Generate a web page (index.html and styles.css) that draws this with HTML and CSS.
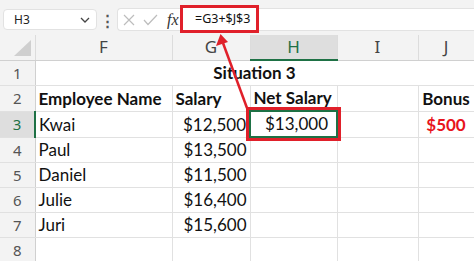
FILE: index.html
```html
<!DOCTYPE html>
<html>
<head>
  <title>Situation 3</title>
  <link rel="stylesheet" href="styles.css">
</head>
<body>
  <div class="window">
    <div class="toolbar">
      <div class="namebox">
        <span>H3</span>
        <svg class="chevron" width="10" height="6" viewBox="0 0 10 6"><path d="M1 1 L5 5 L9 1" fill="none" stroke="#444" stroke-width="1.3"/></svg>
      </div>
      <div class="dots">&#8942;</div>
      <div class="fbar">
        <div class="ficons">
          <svg width="12" height="12" viewBox="0 0 12 12"><path d="M1 1 L11 11 M11 1 L1 11" stroke="#bdbdbd" stroke-width="1.2"/></svg>
          <svg width="15" height="12" viewBox="0 0 15 12"><path d="M1 6 L5 10.5 L14 1" fill="none" stroke="#bdbdbd" stroke-width="1.2"/></svg>
          <span class="fx">fx</span>
        </div>
        <div class="formula">=G3+$J$3</div>
      </div>
    </div>

    <table class="sheet">
      <colgroup>
        <col class="c-row">
        <col class="c-f">
        <col class="c-g">
        <col class="c-h">
        <col class="c-i">
        <col class="c-j">
      </colgroup>
      <tr class="head">
        <th class="corner"><div class="tri"></div></th>
        <th>F</th>
        <th>G</th>
        <th class="sel">H</th>
        <th>I</th>
        <th>J</th>
      </tr>
      <tr>
        <th class="num">1</th>
        <td colspan="5" class="b center title">Situation 3</td>
      </tr>
      <tr>
        <th class="num">2</th>
        <td class="b">Employee Name</td>
        <td class="b">Salary</td>
        <td class="b">Net Salary</td>
        <td></td>
        <td class="b center">Bonus</td>
      </tr>
      <tr>
        <th class="num cur">3</th>
        <td>Kwai</td>
        <td class="r">$12,500</td>
        <td class="r active">$13,000</td>
        <td></td>
        <td class="b center red">$500</td>
      </tr>
      <tr>
        <th class="num">4</th>
        <td>Paul</td>
        <td class="r">$13,500</td>
        <td></td><td></td><td></td>
      </tr>
      <tr>
        <th class="num">5</th>
        <td>Daniel</td>
        <td class="r">$11,500</td>
        <td></td><td></td><td></td>
      </tr>
      <tr>
        <th class="num">6</th>
        <td>Julie</td>
        <td class="r">$16,400</td>
        <td></td><td></td><td></td>
      </tr>
      <tr>
        <th class="num">7</th>
        <td>Juri</td>
        <td class="r">$15,600</td>
        <td></td><td></td><td></td>
      </tr>
      <tr>
        <th class="num">8</th>
        <td></td><td></td><td></td><td></td><td></td>
      </tr>
    </table>

    <!-- annotation arrow from the cell up to the formula -->
    <svg class="arrow" width="474" height="261" viewBox="0 0 474 261">
      <path d="M247 108 L223 43" stroke="#e0202a" stroke-width="2.5" fill="none"/>
      <path d="M220.5 34 L216 46 L228 42 Z" fill="#e0202a"/>
    </svg>
  </div>
</body>
</html>
```

FILE: styles.css
```css
body {
  margin: 0;
  background: #ffffff;
}

.window {
  position: relative;
  width: 474px;
  height: 261px;
  overflow: hidden;
  background: #f3f3f3;
}

.toolbar {
  display: flex;
  align-items: center;
  height: 35px;
  padding-left: 3px;
  box-sizing: border-box;
  font-family: "Noto Sans", sans-serif;
}

.namebox {
  display: flex;
  align-items: center;
  justify-content: space-between;
  width: 94px;
  height: 21px;
  box-sizing: border-box;
  padding: 0 6px 0 10px;
  margin-top: 4px;
  background: #ffffff;
  border: 1px solid #e2e2e2;
  border-radius: 4px;
  font-size: 12px;
  color: #222;
}

.dots {
  width: 20px;
  text-align: center;
  margin-top: 4px;
  font-size: 15px;
  font-weight: bold;
  color: #555;
}

.fbar {
  flex: 1;
  display: flex;
  align-items: center;
  height: 21px;
  margin-top: 4px;
  background: #ffffff;
  border: 1px solid #e2e2e2;
  border-right: none;
  border-radius: 4px 0 0 4px;
}

.ficons {
  display: flex;
  align-items: center;
  gap: 8px;
  width: 62px;
  padding-left: 5px;
  box-sizing: border-box;
}

.fx {
  font-family: "Liberation Serif", serif;
  font-style: italic;
  font-size: 16px;
  color: #333;
  margin-left: 1px;
}

.formula {
  position: relative;
  height: 28px;
  width: 79px;
  box-sizing: border-box;
  margin-top: -2px;
  padding: 0 0 0 12px;
  border: 3px solid #e0202a;
  line-height: 22px;
  font-size: 12.5px;
  color: #111;
  background: #ffffff;
}

.sheet {
  border-collapse: collapse;
  table-layout: fixed;
  width: 474px;
  font-family: Lato, sans-serif;
  font-size: 17px;
  color: #111;
}

.c-row { width: 35px; }
.c-f { width: 137px; }
.c-g { width: 78px; }
.c-h { width: 87px; }
.c-i { width: 81px; }
.c-j { width: 56px; }

.sheet tr {
  height: 25px;
}

.sheet td {
  height: 22px;
  padding: 0 3px 2px 3px;
  border: 1px solid #e1e1e1;
  background: #ffffff;
  vertical-align: bottom;
  white-space: nowrap;
  overflow: hidden;
  line-height: 20px;
}

.head th {
  height: 24px;
  padding: 0;
  border-right: 1px solid #dcdcdc;
  border-bottom: 1px solid #d0d0d0;
  font-family: "Noto Sans", sans-serif;
  font-weight: normal;
  font-size: 17px;
  color: #444;
  background: #f3f3f3;
  line-height: 24px;
}

.head th.sel {
  background: #dedede;
  color: #1e7145;
  border-bottom: 2px solid #1e7145;
}

.corner {
  position: relative;
}

.tri {
  position: absolute;
  right: 4px;
  bottom: 4px;
  width: 0;
  height: 0;
  border-left: 17px solid transparent;
  border-bottom: 16px solid #cfcfcf;
}

.num {
  height: 22px;
  padding: 0;
  border-bottom: 1px solid #e0e0e0;
  border-right: 1px solid #d0d0d0;
  font-family: "Noto Sans", sans-serif;
  font-weight: normal;
  font-size: 15px;
  line-height: 22px;
  color: #555;
  background: #f3f3f3;
  text-align: center;
}

.num.cur {
  background: #dedede;
  color: #1e7145;
  border-right: 2px solid #1e7145;
}

.b {
  font-weight: bold;
}

.center {
  text-align: center;
}

.r {
  text-align: right;
}

.red {
  color: #e8141c;
}

.sheet td.active {
  border: 2px solid #1e7145;
  outline: 3px solid #e0202a;
  outline-offset: 1px;
  padding-right: 8px;
}

.arrow {
  position: absolute;
  left: 0;
  top: 0;
  pointer-events: none;
}
```
